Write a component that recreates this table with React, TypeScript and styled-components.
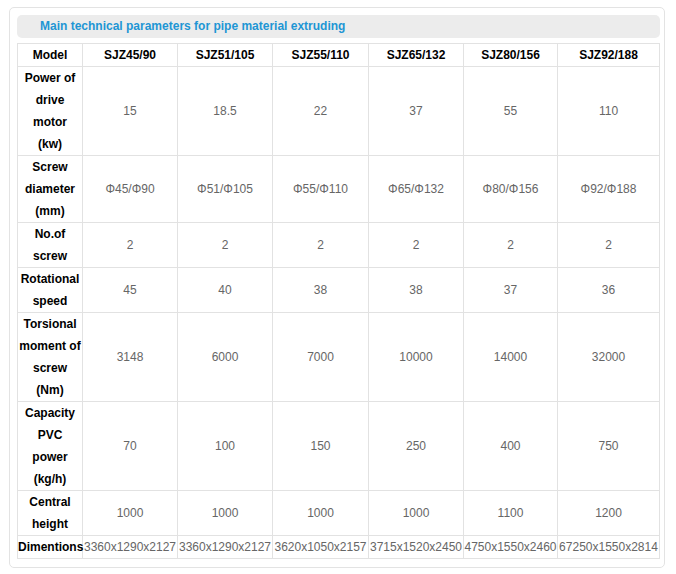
import React from "react";
import styled, { createGlobalStyle } from "styled-components";

type Row = {
	label: string[];
	values: string[];
};

const models = ["SJZ45/90", "SJZ51/105", "SJZ55/110", "SJZ65/132", "SJZ80/156", "SJZ92/188"];

const rows: Row[] = [
	{ label: ["Power of", "drive", "motor", "(kw)"], values: ["15", "18.5", "22", "37", "55", "110"] },
	{
		label: ["Screw", "diameter", "(mm)"],
		values: ["Φ45/Φ90", "Φ51/Φ105", "Φ55/Φ110", "Φ65/Φ132", "Φ80/Φ156", "Φ92/Φ188"],
	},
	{ label: ["No.of", "screw"], values: ["2", "2", "2", "2", "2", "2"] },
	{ label: ["Rotational", "speed"], values: ["45", "40", "38", "38", "37", "36"] },
	{
		label: ["Torsional", "moment of", "screw", "(Nm)"],
		values: ["3148", "6000", "7000", "10000", "14000", "32000"],
	},
	{ label: ["Capacity", "PVC", "power", "(kg/h)"], values: ["70", "100", "150", "250", "400", "750"] },
	{ label: ["Central", "height"], values: ["1000", "1000", "1000", "1000", "1100", "1200"] },
	{
		label: ["Dimentions"],
		values: [
			"3360x1290x2127",
			"3360x1290x2127",
			"3620x1050x2157",
			"3715x1520x2450",
			"4750x1550x2460",
			"67250x1550x2814",
		],
	},
];

const widths = [65, 95, 95, 96, 95, 94, 102];

const GlobalStyle = createGlobalStyle`
	body {
		margin: 0;
		background: #fff;
		font-family: "Liberation Sans", Arial, sans-serif;
	}
`;

const App = () => (
	<>
		<GlobalStyle />
		<Panel>
			<TitleBar>Main technical parameters for pipe material extruding</TitleBar>
			<Table>
				<colgroup>
					{widths.map((w, i) => (
						<col key={i} style={{ width: w }} />
					))}
				</colgroup>
				<tbody>
					<tr>
						<HeadCell>Model</HeadCell>
						{models.map((m) => (
							<HeadCell key={m}>{m}</HeadCell>
						))}
					</tr>
					{rows.map((row) => (
						<tr key={row.label.join(" ")}>
							<HeadCell>
								{row.label.map((line, i) => (
									<React.Fragment key={i}>
										{i > 0 && <br />}
										{line}
									</React.Fragment>
								))}
							</HeadCell>
							{row.values.map((v, i) => (
								<ValueCell key={i}>{v}</ValueCell>
							))}
						</tr>
					))}
				</tbody>
			</Table>
		</Panel>
	</>
);

export default App;

const Panel = styled.div`
	width: 643px;
	margin: 7px 0 0 9px;
	padding: 7px 4px 8px 7px;
	border: 1px solid #e3e3e3;
	border-radius: 5px;
	display: flex;
	flex-direction: column;
	gap: 5px;
`;

const TitleBar = styled.div`
	height: 23px;
	line-height: 23px;
	padding-left: 23px;
	background: #ececec;
	border-radius: 5px;
	color: #1e96d4;
	font-size: 12px;
	font-weight: bold;
`;

const Table = styled.table`
	width: 642px;
	table-layout: fixed;
	border-collapse: collapse;
	font-size: 12px;
`;

const Cell = styled.td`
	border: 1px solid #e2e2e2;
	padding: 0;
	line-height: 22px;
	text-align: center;
	vertical-align: middle;
	white-space: nowrap;
	overflow: visible;
`;

const HeadCell = styled(Cell)`
	color: #000;
	font-weight: bold;
`;

const ValueCell = styled(Cell)`
	color: #666;
`;
